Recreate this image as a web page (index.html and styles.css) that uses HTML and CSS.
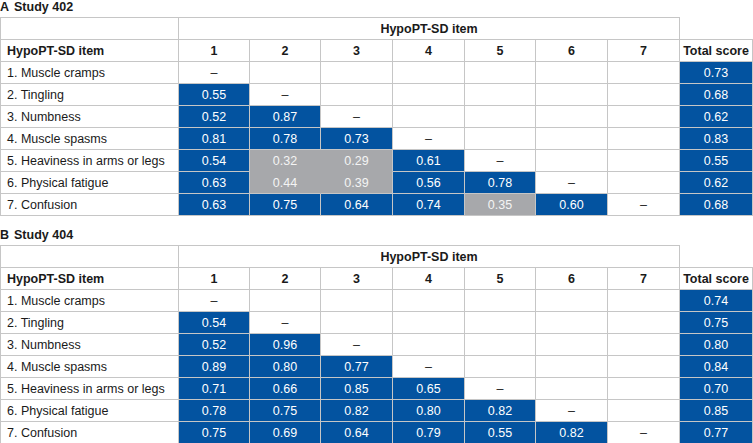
FILE: index.html
```html
<!DOCTYPE html>
<html>
<head>
<meta charset="utf-8">
<link rel="stylesheet" href="styles.css">
</head>
<body>
<div class="panel">
  <h2 class="title"><span class="letter">A</span>Study 402</h2>
  <table class="grid">
    <colgroup><col class="c-label"><col class="c-a"><col class="c-a"><col class="c-b"><col class="c-b"><col class="c-a"><col class="c-b"><col class="c-b"><col class="c-t"></colgroup>
    <tr class="top"><td class="label"></td><th colspan="7">HypoPT-SD item</th><td class="blank"></td></tr>
    <tr class="head"><th class="label">HypoPT-SD item</th><th>1</th><th>2</th><th>3</th><th>4</th><th>5</th><th>6</th><th>7</th><th>Total score</th></tr>
    <tr><td class="label">1. Muscle cramps</td><td>–</td><td></td><td></td><td></td><td></td><td></td><td></td><td class="b">0.73</td></tr>
    <tr><td class="label">2. Tingling</td><td class="b">0.55</td><td>–</td><td></td><td></td><td></td><td></td><td></td><td class="b">0.68</td></tr>
    <tr><td class="label">3. Numbness</td><td class="b">0.52</td><td class="b">0.87</td><td>–</td><td></td><td></td><td></td><td></td><td class="b">0.62</td></tr>
    <tr><td class="label">4. Muscle spasms</td><td class="b">0.81</td><td class="b">0.78</td><td class="b">0.73</td><td>–</td><td></td><td></td><td></td><td class="b">0.83</td></tr>
    <tr><td class="label">5. Heaviness in arms or legs</td><td class="b">0.54</td><td class="g gr gb">0.32</td><td class="g gb">0.29</td><td class="b">0.61</td><td>–</td><td></td><td></td><td class="b">0.55</td></tr>
    <tr><td class="label">6. Physical fatigue</td><td class="b">0.63</td><td class="g gr">0.44</td><td class="g">0.39</td><td class="b">0.56</td><td class="b">0.78</td><td>–</td><td></td><td class="b">0.62</td></tr>
    <tr><td class="label">7. Confusion</td><td class="b">0.63</td><td class="b">0.75</td><td class="b">0.64</td><td class="b">0.74</td><td class="g">0.35</td><td class="b">0.60</td><td>–</td><td class="b">0.68</td></tr>
  </table>
</div>
<div class="panel second">
  <h2 class="title"><span class="letter">B</span>Study 404</h2>
  <table class="grid">
    <colgroup><col class="c-label"><col class="c-a"><col class="c-a"><col class="c-b"><col class="c-b"><col class="c-a"><col class="c-b"><col class="c-b"><col class="c-t"></colgroup>
    <tr class="top"><td class="label"></td><th colspan="7">HypoPT-SD item</th><td class="blank"></td></tr>
    <tr class="head"><th class="label">HypoPT-SD item</th><th>1</th><th>2</th><th>3</th><th>4</th><th>5</th><th>6</th><th>7</th><th>Total score</th></tr>
    <tr><td class="label">1. Muscle cramps</td><td>–</td><td></td><td></td><td></td><td></td><td></td><td></td><td class="b">0.74</td></tr>
    <tr><td class="label">2. Tingling</td><td class="b">0.54</td><td>–</td><td></td><td></td><td></td><td></td><td></td><td class="b">0.75</td></tr>
    <tr><td class="label">3. Numbness</td><td class="b">0.52</td><td class="b">0.96</td><td>–</td><td></td><td></td><td></td><td></td><td class="b">0.80</td></tr>
    <tr><td class="label">4. Muscle spasms</td><td class="b">0.89</td><td class="b">0.80</td><td class="b">0.77</td><td>–</td><td></td><td></td><td></td><td class="b">0.84</td></tr>
    <tr><td class="label">5. Heaviness in arms or legs</td><td class="b">0.71</td><td class="b">0.66</td><td class="b">0.85</td><td class="b">0.65</td><td>–</td><td></td><td></td><td class="b">0.70</td></tr>
    <tr><td class="label">6. Physical fatigue</td><td class="b">0.78</td><td class="b">0.75</td><td class="b">0.82</td><td class="b">0.80</td><td class="b">0.82</td><td>–</td><td></td><td class="b">0.85</td></tr>
    <tr><td class="label">7. Confusion</td><td class="b">0.75</td><td class="b">0.69</td><td class="b">0.64</td><td class="b">0.79</td><td class="b">0.55</td><td class="b">0.82</td><td>–</td><td class="b">0.77</td></tr>
  </table>
</div>
</body>
</html>
```
FILE: styles.css
```css
html, body {
  margin: 0;
  padding: 0;
  background: #ffffff;
}
body {
  font-family: "Liberation Sans", Arial, sans-serif;
  font-size: 12.5px;
  color: #1a1a1a;
  width: 753px;
}
.panel.second .title {
  padding-top: 12px;
}
.title {
  margin: 0 0 2px 0;
  font-size: 12.5px;
  font-weight: bold;
  line-height: 15px;
}
.letter {
  margin-right: 5px;
}
.grid {
  border-collapse: separate;
  border-spacing: 0;
  table-layout: fixed;
  width: 753px;
}
.c-label { width: 179px; }
.c-a { width: 71px; }
.c-b { width: 72px; }
.c-t { width: 73px; }
.grid td, .grid th {
  height: 21px;
  padding: 0;
  text-align: center;
  vertical-align: middle;
  border-right: 1px solid #c6c6c6;
  border-bottom: 1px solid #c6c6c6;
  white-space: nowrap;
  overflow: hidden;
}
.grid th {
  font-weight: bold;
}
.grid .label {
  text-align: left;
  padding-left: 6px;
  border-left: 1px solid #c6c6c6;
}
.grid tr.top td, .grid tr.top th {
  border-top: 1px solid #c6c6c6;
}
.grid tr.top td.blank {
  border-top: none;
  border-right: none;
}
.grid td.b {
  background: #0353a0;
  color: #ffffff;
}
.grid td.g {
  background: #a7a8ab;
  color: #f4f4f4;
}
.grid td.gr {
  border-right-color: #a7a8ab;
}
.grid td.gb {
  border-bottom-color: #a7a8ab;
}
```
